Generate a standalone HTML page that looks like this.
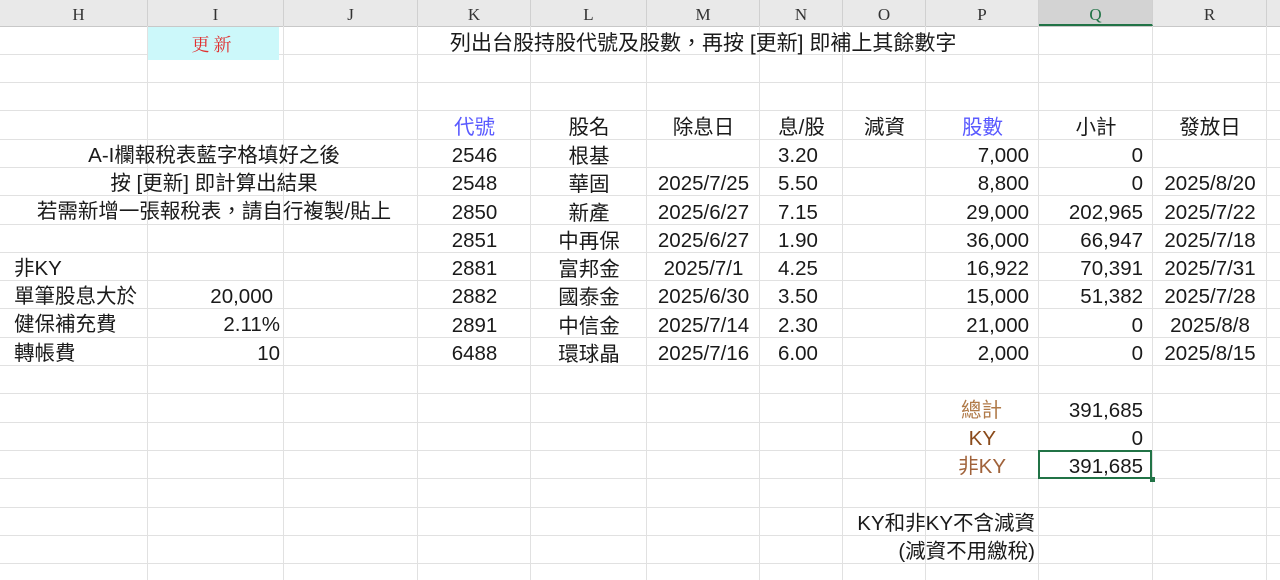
<!DOCTYPE html>
<html><head><meta charset="utf-8"><style>
body{margin:0;width:1280px;height:580px;overflow:hidden;background:#fff;font-family:"Liberation Sans","Noto Sans CJK TC",sans-serif;color:#1a1a1a;position:relative}
.hdr{position:absolute;top:0;left:0;width:1280px;height:26px;background:#e9e9e9;border-bottom:1px solid #c8c8c8}
.hc{position:absolute;top:0;height:26px;line-height:30px;text-align:center;font-family:"Liberation Serif",serif;font-size:17px;color:#333;border-right:1px solid #d0d0d0;box-sizing:border-box}
.v{position:absolute;top:26px;bottom:0;width:1px;background:#e1e1e1}
.h{position:absolute;left:0;width:1280px;height:1px;background:#e1e1e1}
.t{position:absolute;font-size:20.5px;line-height:28px;white-space:nowrap}
.c{text-align:center}.r{text-align:right}
.blue{color:#5a5aff}
</style></head><body>
<div class="hdr"></div>
<div class="hc" style="left:10px;width:138px">H</div>
<div class="hc" style="left:148px;width:136px">I</div>
<div class="hc" style="left:284px;width:134px">J</div>
<div class="hc" style="left:418px;width:113px">K</div>
<div class="hc" style="left:531px;width:116px">L</div>
<div class="hc" style="left:647px;width:113px">M</div>
<div class="hc" style="left:760px;width:83px">N</div>
<div class="hc" style="left:843px;width:83px">O</div>
<div class="hc" style="left:926px;width:113px">P</div>
<div class="hc" style="left:1039px;width:114px;background:#d3d3d3;border-bottom:2px solid #217346;color:#217346">Q</div>
<div class="hc" style="left:1153px;width:114px">R</div>
<div class="v" style="left:147px"></div><div class="v" style="left:283px"></div><div class="v" style="left:417px"></div><div class="v" style="left:530px"></div><div class="v" style="left:646px"></div><div class="v" style="left:759px"></div><div class="v" style="left:842px"></div><div class="v" style="left:925px"></div><div class="v" style="left:1038px"></div><div class="v" style="left:1152px"></div><div class="v" style="left:1266px"></div>
<div class="h" style="top:54px"></div><div class="h" style="top:82px"></div><div class="h" style="top:110px"></div><div class="h" style="top:139px"></div><div class="h" style="top:167px"></div><div class="h" style="top:195px"></div><div class="h" style="top:224px"></div><div class="h" style="top:252px"></div><div class="h" style="top:280px"></div><div class="h" style="top:308px"></div><div class="h" style="top:337px"></div><div class="h" style="top:365px"></div><div class="h" style="top:393px"></div><div class="h" style="top:422px"></div><div class="h" style="top:450px"></div><div class="h" style="top:478px"></div><div class="h" style="top:507px"></div><div class="h" style="top:535px"></div><div class="h" style="top:563px"></div>
<div style="position:absolute;left:148px;top:27px;width:131px;height:33px;background:#ccf8fa"></div>
<div class="t c" style="left:148px;width:131px;top:30px;color:#e03030;font-family:'Noto Serif CJK SC',serif;letter-spacing:4px;font-size:18px">更新</div>
<div class="t" style="left:450px;top:30px;font-size:21px">列出台股持股代號及股數，再按 [更新] 即補上其餘數字</div>
<div class="t c" style="left:10px;width:408px;top:142px">A-I欄報稅表藍字格填好之後</div>
<div class="t c" style="left:10px;width:408px;top:170px">按 [更新] 即計算出結果</div>
<div class="t c" style="left:10px;width:408px;top:198px">若需新增一張報稅表，請自行複製/貼上</div>
<div class="t" style="left:14px;top:255px">非KY</div>
<div class="t" style="left:14px;top:283px">單筆股息大於</div><div class="t r" style="left:148px;width:125px;top:283px">20,000</div>
<div class="t" style="left:14px;top:311px">健保補充費</div><div class="t r" style="left:148px;width:132px;top:311px">2.11%</div>
<div class="t" style="left:14px;top:340px">轉帳費</div><div class="t r" style="left:148px;width:132px;top:340px">10</div>
<div class="t c blue" style="left:418px;width:113px;top:114px">代號</div>
<div class="t c" style="left:531px;width:116px;top:114px">股名</div>
<div class="t c" style="left:647px;width:113px;top:114px">除息日</div>
<div class="t c" style="left:760px;width:83px;top:114px">息/股</div>
<div class="t c" style="left:843px;width:83px;top:114px">減資</div>
<div class="t c blue" style="left:926px;width:113px;top:114px">股數</div>
<div class="t c" style="left:1039px;width:114px;top:114px">小計</div>
<div class="t c" style="left:1153px;width:114px;top:114px">發放日</div>
<div id="rows"></div>
<script>
var d=[["2546","根基","","3.20","7,000","0",""],["2548","華固","2025/7/25","5.50","8,800","0","2025/8/20"],["2850","新產","2025/6/27","7.15","29,000","202,965","2025/7/22"],["2851","中再保","2025/6/27","1.90","36,000","66,947","2025/7/18"],["2881","富邦金","2025/7/1","4.25","16,922","70,391","2025/7/31"],["2882","國泰金","2025/6/30","3.50","15,000","51,382","2025/7/28"],["2891","中信金","2025/7/14","2.30","21,000","0","2025/8/8"],["6488","環球晶","2025/7/16","6.00","2,000","0","2025/8/15"]];
var h="";d.forEach(function(r,i){var y=142+i*28.25;
h+='<div class="t c" style="left:418px;width:113px;top:'+y+'px">'+r[0]+'</div>';
h+='<div class="t c" style="left:531px;width:116px;top:'+(y+1)+'px">'+r[1]+'</div>';
h+='<div class="t c" style="left:647px;width:113px;top:'+y+'px">'+r[2]+'</div>';
h+='<div class="t" style="left:778px;top:'+y+'px">'+r[3]+'</div>';
h+='<div class="t r" style="left:926px;width:103px;top:'+y+'px">'+r[4]+'</div>';
h+='<div class="t r" style="left:1039px;width:104px;top:'+y+'px">'+r[5]+'</div>';
h+='<div class="t c" style="left:1153px;width:114px;top:'+y+'px">'+r[6]+'</div>';});
document.getElementById("rows").innerHTML=h;
</script>
<div class="t r" style="left:926px;width:76px;top:397px;color:#b07a48">總計</div>
<div class="t r" style="left:1039px;width:104px;top:397px">391,685</div>
<div class="t r" style="left:926px;width:70px;top:425px;color:#8a4a1a">KY</div>
<div class="t r" style="left:1039px;width:104px;top:425px">0</div>
<div class="t r" style="left:926px;width:80px;top:453px;color:#a0623a">非KY</div>
<div style="position:absolute;left:1038px;top:450px;width:114px;height:29px;border:2px solid #217346;box-sizing:border-box"></div>
<div style="position:absolute;left:1150px;top:477px;width:5px;height:5px;background:#217346"></div>
<div class="t r" style="left:1039px;width:104px;top:453px">391,685</div>
<div class="t r" style="left:790px;width:245px;top:510px">KY和非KY不含減資</div>
<div class="t r" style="left:790px;width:245px;top:538px">(減資不用繳稅)</div>
</body></html>
